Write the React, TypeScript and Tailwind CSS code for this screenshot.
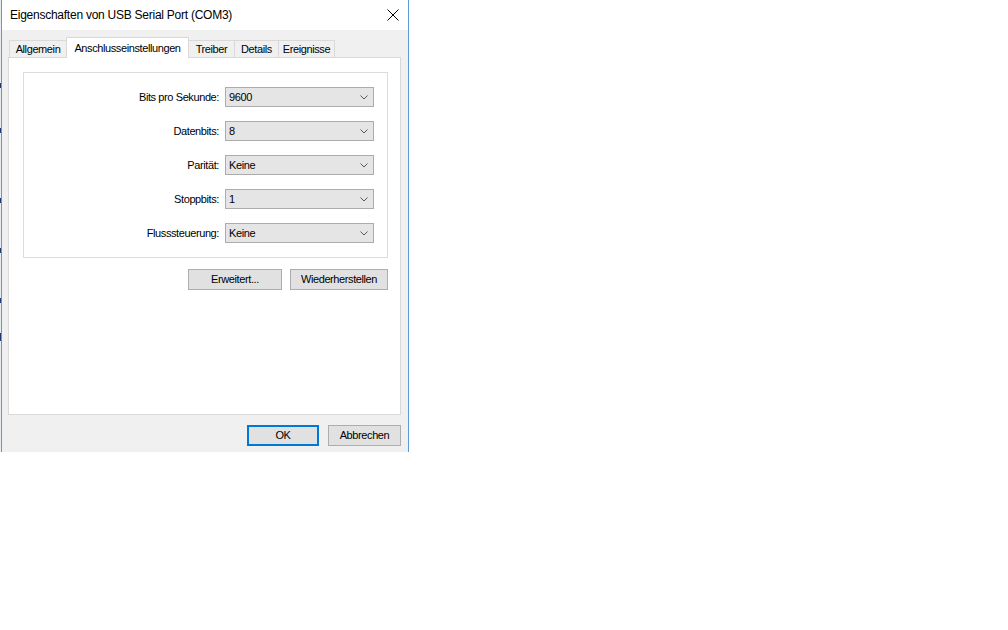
import React from 'react';

const font = { fontFamily: '"Liberation Sans", Arial, sans-serif' };

const rows = [
  { label: 'Bits pro Sekunde:', value: '9600' },
  { label: 'Datenbits:', value: '8' },
  { label: 'Parität:', value: 'Keine' },
  { label: 'Stoppbits:', value: '1' },
  { label: 'Flusssteuerung:', value: 'Keine' },
];

const CloseIcon = () => (
  <svg width="12" height="12" viewBox="0 0 12 12" fill="none" stroke="#000" strokeWidth="1">
    <path d="M0.5 0.5 L11.5 11.5 M11.5 0.5 L0.5 11.5" />
  </svg>
);

const Chevron = () => (
  <svg width="8" height="5" viewBox="0 0 8 5" fill="none" stroke="#5a5a5a" strokeWidth="1">
    <path d="M0.5 0.5 L4 4 L7.5 0.5" />
  </svg>
);

const Combo = ({ value }: { value: string }) => (
  <div className="w-[149px] h-[20px] flex items-center justify-between bg-[#e5e5e5] border border-[#acacac] pl-[3px] pr-[5px]">
    <span>{value}</span>
    <Chevron />
  </div>
);

const Btn = ({ children, w, primary }: { children: React.ReactNode; w: string; primary?: boolean }) => (
  <div
    className={`${w} h-[21px] flex items-center justify-center bg-[#e1e1e1] ${
      primary ? 'border-2 border-[#0078d7]' : 'border border-[#adadad]'
    }`}
  >
    {children}
  </div>
);

export default function App() {
  return (
    <div className="w-full h-[630px] bg-white flex items-start text-black" style={font}>
      {/* sliver of the window behind */}
      <div className="w-px h-[452px] bg-[#e8edf2] flex flex-col">
        <div className="h-[83px]" />
        <div className="h-[5px] bg-[#1f3a6e]" />
        <div className="h-[40px]" />
        <div className="h-[5px] bg-[#1f3a6e]" />
        <div className="h-[65px]" />
        <div className="h-[5px] bg-[#1f3a6e]" />
        <div className="h-[45px]" />
        <div className="h-[5px] bg-[#1f3a6e]" />
        <div className="h-[45px]" />
        <div className="h-[5px] bg-[#1f3a6e]" />
        <div className="h-[30px]" />
        <div className="h-[8px] bg-[#1f3a6e]" />
      </div>

      <div className="w-[408px] h-[452px] flex flex-col border-x border-[#5b9bd5]">
        {/* title bar */}
        <div className="h-[30px] bg-white flex items-center justify-between pl-[8px] pr-[9px]">
          <span className="text-[12px] tracking-[-0.25px]">Eigenschaften von USB Serial Port (COM3)</span>
          <CloseIcon />
        </div>

        <div className="flex-1 bg-[#f0f0f0] flex flex-col pl-[6px] pr-[7px] pt-[7px] text-[11px] tracking-[-0.4px]">
          {/* tabs */}
          <div className="h-[20px] flex items-end pl-px">
            <div className="w-[57px] h-[17px] flex items-center justify-center border-l border-t border-[#d9d9d9]">
              Allgemein
            </div>
            <div className="relative z-10 w-[123px] h-[21px] -mb-px bg-white flex items-center justify-center border-x border-t border-[#d9d9d9]">
              Anschlusseinstellungen
            </div>
            <div className="w-[45px] h-[17px] flex items-center justify-center border-t border-[#d9d9d9]">
              Treiber
            </div>
            <div className="w-[44px] h-[17px] flex items-center justify-center border-l border-t border-[#d9d9d9]">
              Details
            </div>
            <div className="w-[57px] h-[17px] flex items-center justify-center border-x border-t border-[#d9d9d9]">
              Ereignisse
            </div>
          </div>

          {/* tab page */}
          <div className="h-[358px] bg-white border border-[#d9d9d9] pl-[14px] pr-[12px] pt-[14px] flex flex-col">
            <div className="border border-[#dcdcdc] pt-[14px] pb-[14px] flex flex-col gap-[14px]">
              {rows.map((r) => (
                <div key={r.label} className="flex items-center gap-[6px]">
                  <span className="w-[195px] text-right">{r.label}</span>
                  <Combo value={r.value} />
                </div>
              ))}
            </div>
            <div className="mt-[11px] flex justify-end gap-[8px]">
              <Btn w="w-[94px]">Erweitert...</Btn>
              <Btn w="w-[98px]">Wiederherstellen</Btn>
            </div>
          </div>

          {/* dialog buttons */}
          <div className="mt-[10px] flex justify-end gap-[9px]">
            <Btn w="w-[72px]" primary>
              OK
            </Btn>
            <Btn w="w-[73px]">Abbrechen</Btn>
          </div>
        </div>
      </div>
    </div>
  );
}
